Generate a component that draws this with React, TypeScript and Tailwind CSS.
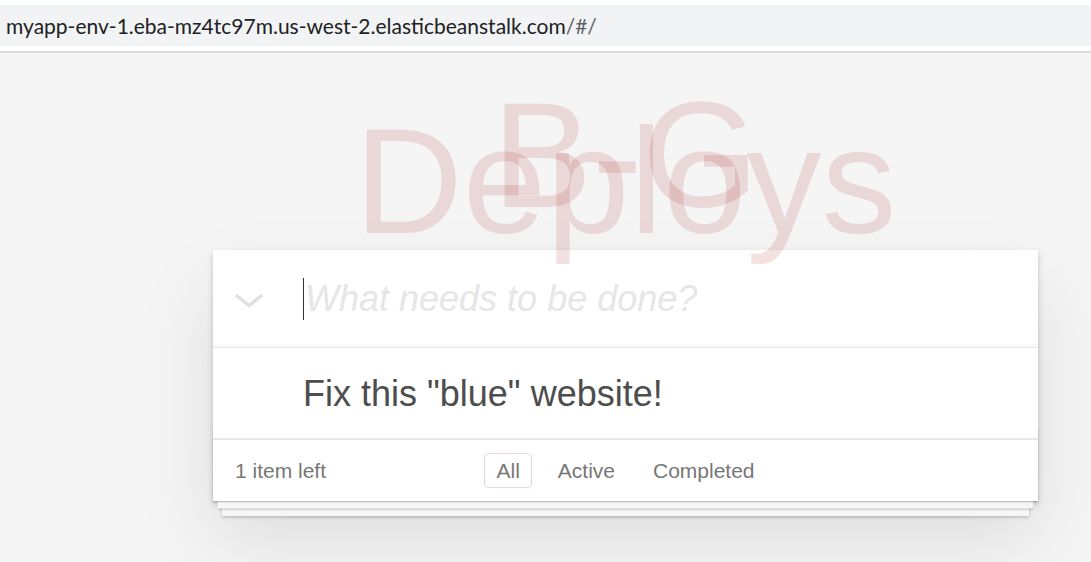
const filters = ["All", "Active", "Completed"];

function AddressBar() {
  return (
    <div className="bg-white pt-[5px]">
      <div className="h-[41px] bg-[#f1f3f4] flex items-center pl-[6px] font-['Lato','Noto_Sans',sans-serif] text-[21px] text-[#202124]">
        <span>myapp-env-1.eba-mz4tc97m.us-west-2.elasticbeanstalk.com</span>
        <span className="text-[#5f6368]">/#/</span>
      </div>
      <div className="h-[5px] bg-white" />
      <div className="h-[2px] bg-[#dadce0]" />
    </div>
  );
}

function Title() {
  return (
    <div className="absolute inset-x-0 -top-[144px] z-10 pointer-events-none text-center text-[150px] leading-none text-[rgba(175,47,47,0.15)]">
      <div className="absolute inset-x-0 -top-[26px]">B-G</div>
      <div>Deploys</div>
    </div>
  );
}

export default function App() {
  return (
    <div className="min-h-[562px] bg-[#f5f5f5] font-['Liberation_Sans',Arial,sans-serif] text-[#4d4d4d] overflow-hidden">
      <AddressBar />
      <section className="relative w-[825px] ml-[213px] mt-[197px] mb-[60px] bg-white shadow-[0_3px_6px_0_rgba(0,0,0,0.2),0_37.5px_75px_0_rgba(0,0,0,0.1)]">
        <Title />
        <header className="h-[97px] flex items-start shadow-[inset_0_-3px_1.5px_rgba(0,0,0,0.03)]">
          <div className="w-[90px] h-full flex items-center pl-[22px] pt-[4px]">
            <svg width="28" height="14" viewBox="0 0 28 14" fill="none">
              <polyline
                points="2,2 14,11.5 26,2"
                stroke="#e0e0e0"
                strokeWidth="3.5"
                strokeLinecap="round"
                strokeLinejoin="round"
              />
            </svg>
          </div>
          <div className="pt-[24px] flex items-center leading-[50px] text-[36px] italic text-[#e6e6e6]">
            <span className="inline-block w-px h-[42px] bg-[#333]" />
            <span className="ml-[1px]">What needs to be done?</span>
          </div>
        </header>
        <ul className="border-t border-[#e6e6e6]">
          <li className="border-b border-[#ededed] pl-[90px] pt-[24px] pb-[23px] text-[36px] leading-[1.2]">
            Fix this "blue" website!
          </li>
        </ul>
        <footer className="relative h-[62px] px-[22px] border-t border-[#e6e6e6] grid grid-cols-[1fr_auto_1fr] items-center text-[21px] text-[#777]">
          <div className="absolute inset-x-0 bottom-0 h-[75px] pointer-events-none shadow-[0_1.5px_1.5px_rgba(0,0,0,0.2),0_12px_0_-4.5px_#f6f6f6,0_13.5px_1.5px_-4.5px_rgba(0,0,0,0.2),0_24px_0_-9px_#f6f6f6,0_25.5px_3px_-9px_rgba(0,0,0,0.2)]" />
          <span className="relative">1 item left</span>
          <ul className="relative flex gap-[14px]">
            {filters.map((f) => (
              <li key={f}>
                <span
                  className={
                    f === "All"
                      ? "block px-[11px] py-[1px] rounded-[4px] border border-[rgba(175,47,47,0.2)] text-[#777]"
                      : "block px-[11px] py-[1px] rounded-[4px] border border-transparent"
                  }
                >
                  {f}
                </span>
              </li>
            ))}
          </ul>
          <span />
        </footer>
      </section>
    </div>
  );
}
